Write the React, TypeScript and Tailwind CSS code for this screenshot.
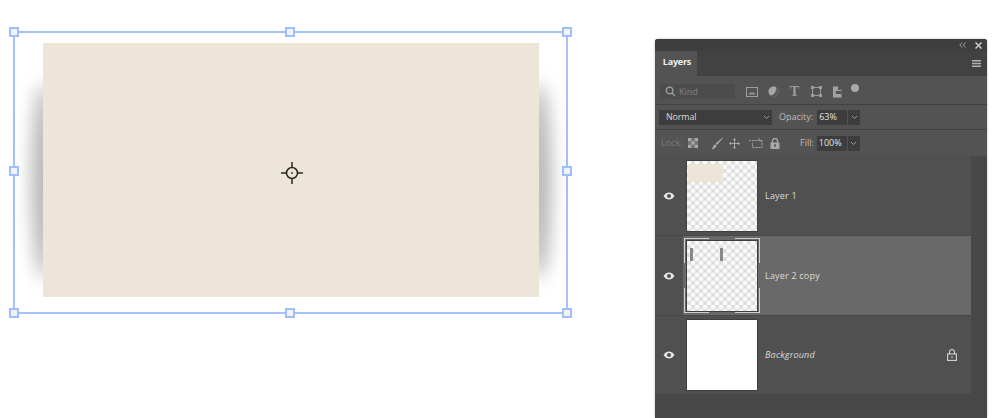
import React from "react";

const handleCls = "absolute w-[10px] h-[10px] border-2 border-[#9fbffc] bg-[#f3f3f6] z-20";

function Chevron() {
  return (
    <svg width="7" height="5" viewBox="0 0 7 5" fill="none" stroke="#999999" strokeWidth="1">
      <path d="M1 1l2.500 2.500L6 1" />
    </svg>
  );
}

function Eye() {
  return (
    <svg width="12" height="8" viewBox="0 0 12 8">
      <path d="M0.500 4C2 1.500 4 0.500 6 0.500S10 1.500 11.500 4C10 6.500 8 7.500 6 7.500S2 6.500 0.500 4z" fill="#e6e6e6" />
      <circle cx="6" cy="4" r="2" fill="#505050" />
    </svg>
  );
}

function Thumb({ children, plain }: { children?: React.ReactNode; plain?: boolean }) {
  return (
    <div
      className={
        plain
          ? "relative w-[70px] h-[70px] bg-white outline outline-1 outline-[#3f3f3f]"
          : "relative w-[70px] h-[70px] bg-[conic-gradient(#e0e0e0_25%,#fafafa_0_50%,#e0e0e0_0_75%,#fafafa_0)] bg-[length:8px_8px] outline outline-1 outline-[#3f3f3f]"
      }
    >
      {children}
    </div>
  );
}

function Row({
  label,
  selected,
  italic,
  plain,
  h,
  children,
  right,
}: {
  label: string;
  selected?: boolean;
  italic?: boolean;
  plain?: boolean;
  h: string;
  children?: React.ReactNode;
  right?: React.ReactNode;
}) {
  return (
    <div className={`flex items-center border-b border-[#484848] ${h}`}>
      <div className="w-[28px] flex justify-center shrink-0">
        <Eye />
      </div>
      <div className={`flex-1 h-full flex items-center pl-[4px] pr-[13px] ${selected ? "bg-[#696969]" : ""}`}>
        {selected ? (
          <div className="relative w-[76px] h-[75px] -ml-[3px] mr-[5px] flex items-center justify-center shrink-0">
            <div className="border border-[#3f3f3f]">
              <Thumb plain={plain}>{children}</Thumb>
            </div>
            <span className="absolute left-0 top-0 w-[25px] h-[1px] bg-[#cfcfcf]" />
            <span className="absolute right-0 top-0 w-[25px] h-[1px] bg-[#cfcfcf]" />
            <span className="absolute left-0 bottom-0 w-[25px] h-[1px] bg-[#cfcfcf]" />
            <span className="absolute right-0 bottom-0 w-[25px] h-[1px] bg-[#cfcfcf]" />
            <span className="absolute left-0 top-0 w-[1px] h-[25px] bg-[#cfcfcf]" />
            <span className="absolute right-0 top-0 w-[1px] h-[25px] bg-[#cfcfcf]" />
            <span className="absolute left-0 bottom-0 w-[1px] h-[25px] bg-[#cfcfcf]" />
            <span className="absolute right-0 bottom-0 w-[1px] h-[25px] bg-[#cfcfcf]" />
          </div>
        ) : (
          <div className="mr-[8px] shrink-0">
            <Thumb plain={plain}>{children}</Thumb>
          </div>
        )}
        <span className={`text-[9px] text-[#dcdcdc] tracking-[0.2px] ${italic ? "italic" : ""}`}>{label}</span>
        <div className="flex-1" />
        {right}
      </div>
    </div>
  );
}

export default function App() {
  return (
    <div className="relative flex w-[1000px] h-[418px] overflow-hidden bg-white font-['Open_Sans',sans-serif]">
      {/* canvas */}
      <div className="w-[655px] shrink-0 pl-[13px] pt-[31px]">
        <div className="relative w-[555px] h-[283px] border-2 border-[#a3c2fc]">
          <div className="absolute left-[17px] top-[50px] w-[24px] h-[196px] rounded-[50%] bg-black/30 blur-[9px]" />
          <div className="absolute left-[512px] top-[50px] w-[24px] h-[196px] rounded-[50%] bg-black/30 blur-[9px]" />
          <div className="relative ml-[28px] mt-[10px] w-[496px] h-[254px] bg-[#eee5d9]" />
          <svg
            className="absolute left-[266px] top-[129px]"
            width="22"
            height="22"
            viewBox="0 0 22 22"
            fill="none"
            stroke="#2a2622"
            strokeWidth="1.500"
          >
            <circle cx="11" cy="11" r="5.500" />
            <path d="M11 0v5M11 17v5M0 11h5M17 11h5" />
            <circle cx="11" cy="11" r="0.700" fill="#2a2622" strokeWidth="0.500" />
          </svg>
          <span className={`${handleCls} -left-[6px] -top-[6px]`} />
          <span className={`${handleCls} left-[270px] -top-[6px]`} />
          <span className={`${handleCls} -right-[6px] -top-[6px]`} />
          <span className={`${handleCls} -left-[6px] top-[133px]`} />
          <span className={`${handleCls} -right-[6px] top-[133px]`} />
          <span className={`${handleCls} -left-[6px] -bottom-[6px]`} />
          <span className={`${handleCls} left-[270px] -bottom-[6px]`} />
          <span className={`${handleCls} -right-[6px] -bottom-[6px]`} />
        </div>
      </div>

      {/* panel */}
      <div className="mt-[39px] w-[332px] h-[379px] rounded-t-[3px] bg-[#484848] flex flex-col overflow-hidden shadow-[0_0_2px_rgba(0,0,0,0.35)]">
        <div className="h-[12px] bg-[#3e3e3e] flex items-center justify-end gap-[9px] pr-[5px] shrink-0">
          <svg width="7" height="6" viewBox="0 0 7 6" fill="none" stroke="#a0a0a0" strokeWidth="1">
            <path d="M3 0.500L0.800 3 3 5.500M6.500 0.500L4.300 3 6.500 5.500" />
          </svg>
          <svg width="7" height="7" viewBox="0 0 7 7" fill="none" stroke="#cccccc" strokeWidth="1.500">
            <path d="M0.500 0.500l6 6M6.500 0.500l-6 6" />
          </svg>
        </div>
        <div className="h-[25px] bg-[#424242] flex items-stretch justify-between shrink-0">
          <div className="w-[42px] bg-[#535353] flex items-center justify-center pb-[3px] pl-[2px] text-[9px] tracking-[-0.2px] font-bold text-[#f0f0f0]">
            Layers
          </div>
          <svg className="self-center mr-[6px]" width="9" height="7" viewBox="0 0 9 7" fill="#b0b0b0">
            <path d="M0 0h9v1.400H0zM0 2.800h9v1.400H0zM0 5.600h9V7H0z" />
          </svg>
        </div>
        <div className="h-[29px] bg-[#535353] border-b border-[#404040] flex items-center pl-[5px] pt-[3px] shrink-0">
          <div className="w-[75px] h-[15px] bg-[#4c4c4c] flex items-center pl-[5px] gap-[3px] text-[9px] text-[#808080]">
            <svg width="11" height="11" viewBox="0 0 11 11" fill="none" stroke="#a0a0a0" strokeWidth="1.300">
              <circle cx="4.500" cy="4.500" r="3.300" />
              <path d="M7 7l3 3" />
            </svg>
            Kind
          </div>
          <div className="flex items-center gap-[10px] ml-[11px]">
            <svg width="12" height="10" viewBox="0 0 12 10" fill="none" stroke="#9c9c9c">
              <rect x="0.500" y="0.500" width="11" height="9" />
              <path d="M2.500 7.500l2-2.500 1.500 1.500 1.500-1.500 2 2.500z" fill="#9c9c9c" stroke="none" />
            </svg>
            <svg width="11" height="11" viewBox="0 0 11 11">
              <circle cx="5.500" cy="5.500" r="5" fill="#a6a6a6" />
              <path d="M8.500 1.500A5 5 0 0 1 2.500 9.500C6 9 8 6 8.500 1.500z" fill="#5a5a5a" />
            </svg>
            <span className="w-[11px] text-center text-[14px] leading-none font-bold font-['Liberation_Serif',serif] text-[#9c9c9c]">T</span>
            <svg width="11" height="11" viewBox="0 0 11 11" fill="none" stroke="#9c9c9c" className="ml-[1px]">
              <rect x="1.500" y="1.500" width="8" height="8" />
              <path d="M0 0h3v3H0zM8 0h3v3H8zM0 8h3v3H0zM8 8h3v3H8z" fill="#9c9c9c" stroke="none" />
            </svg>
            <svg width="10" height="12" viewBox="0 0 10 12">
              <path d="M1 0.500h5l3.500 3.500v7.500H1z" fill="#a2a2a2" />
              <path d="M6 0.500v3.500h3.500z" fill="#535353" />
              <rect x="3.800" y="5" width="5.700" height="3" fill="#535353" />
            </svg>
            <span className="w-[8px] h-[8px] rounded-full bg-[#a8a8a8] -mt-[8px] -ml-[1px]" />
          </div>
        </div>
        <div className="h-[25px] bg-[#535353] border-b border-[#404040] flex items-center pl-[4px] text-[9px] shrink-0">
          <div className="w-[113px] h-[15px] bg-[#3d3d3d] flex items-center justify-between pl-[7px] pr-[2px] text-[#d8d8d8]">
            <span className="tracking-[-0.2px]">Normal</span>
            <Chevron />
          </div>
          <span className="ml-[7px] text-[#bcbcbc]">Opacity:</span>
          <div className="ml-[4px] w-[30px] h-[15px] bg-[#3d3d3d] flex items-center pl-[2px] text-[#e2e2e2]">63%</div>
          <div className="ml-[1px] w-[12px] h-[15px] bg-[#3d3d3d] flex items-center justify-center">
            <Chevron />
          </div>
        </div>
        <div className="h-[26px] bg-[#535353] flex items-center pl-[6px] text-[9px] shrink-0">
          <span className="w-[27px] text-[#7a7a7a]">Lock:</span>
          <svg width="10" height="10" viewBox="0 0 10 10" fill="#a8a8a8">
            <path d="M0 0h3.300v3.300H0zM6.700 0H10v3.300H6.700zM3.300 3.300h3.400v3.400H3.300zM0 6.700h3.300V10H0zM6.700 6.700H10V10H6.700z" />
            <path d="M3.300 0h3.400v3.300H3.300zM0 3.300h3.300v3.400H0zM6.700 3.300H10v3.400H6.700zM3.300 6.700h3.400V10H3.300z" opacity="0.400" />
          </svg>
          <svg className="ml-[13px]" width="12" height="13" viewBox="0 0 12 13" fill="#a8a8a8">
            <path d="M11.500 0.500L12 1 6 8 4.500 6.500zM4 7.200L5.500 8.700C5 11 2.500 12.500 0.500 12.500 2 11 2 8 4 7.200z" />
          </svg>
          <svg className="ml-[6px]" width="11" height="11" viewBox="0 0 11 11" fill="none" stroke="#a8a8a8">
            <path d="M5.500 1.500v8M1.500 5.500h8" />
            <path d="M5.500 0L7.300 2H3.700zM5.500 11L3.700 9h3.600zM0 5.500L2 3.700v3.600zM11 5.500L9 3.700v3.600z" fill="#a8a8a8" stroke="none" />
          </svg>
          <svg className="ml-[9px]" width="14" height="10" viewBox="0 0 14 10" fill="none" stroke="#a8a8a8">
            <path d="M0 2.500h3.500M3.500 2.500h6l3.500 0v7H3.500v-5" strokeDasharray="2 1" />
            <path d="M9 0.500l4 3.500" />
          </svg>
          <svg className="ml-[7px]" width="10" height="11" viewBox="0 0 10 11">
            <path d="M2.500 5V3a2.500 2.500 0 0 1 5 0v2" fill="none" stroke="#a8a8a8" strokeWidth="1.300" />
            <rect x="0.500" y="4.500" width="9" height="6.500" fill="#a8a8a8" />
            <rect x="4" y="6.500" width="2" height="2" fill="#535353" />
          </svg>
          <span className="ml-[20px] text-[#bcbcbc]">Fill:</span>
          <div className="ml-[3px] w-[30px] h-[15px] bg-[#3d3d3d] flex items-center pl-[2px] text-[#e2e2e2]">100%</div>
          <div className="ml-[1px] w-[12px] h-[15px] bg-[#3d3d3d] flex items-center justify-center">
            <Chevron />
          </div>
        </div>
        <div className="flex-1 flex flex-col bg-[#484848]">
          <div className="w-[316px] bg-[#505050]">
            <Row label="Layer 1" h="h-[80px]">
              <div className="absolute left-[1px] top-[3px] w-[35px] h-[18px] rounded-[1px] bg-[#eee5d9] blur-[0.5px]" />
            </Row>
            <Row label="Layer 2 copy" selected h="h-[80px]">
              <span className="absolute left-[3px] top-[7px] w-[3px] h-[13px] bg-[#8a8a8a] blur-[0.5px]" />
              <span className="absolute left-[33px] top-[7px] w-[3px] h-[13px] bg-[#8a8a8a] blur-[0.5px]" />
            </Row>
            <Row
              label="Background"
              italic
              plain
              h="h-[79px]"
              right={
                <svg className="mr-[1px]" width="10" height="12" viewBox="0 0 10 12" fill="none" stroke="#d6d6d6" strokeWidth="1.100">
                  <path d="M2.500 5V3a2.500 2.500 0 0 1 5 0v2" />
                  <rect x="0.600" y="5" width="8.800" height="6.400" />
                  <rect x="4.300" y="7.500" width="1.400" height="1.400" fill="#d6d6d6" stroke="none" />
                </svg>
              }
            />
          </div>
        </div>
      </div>
    </div>
  );
}
